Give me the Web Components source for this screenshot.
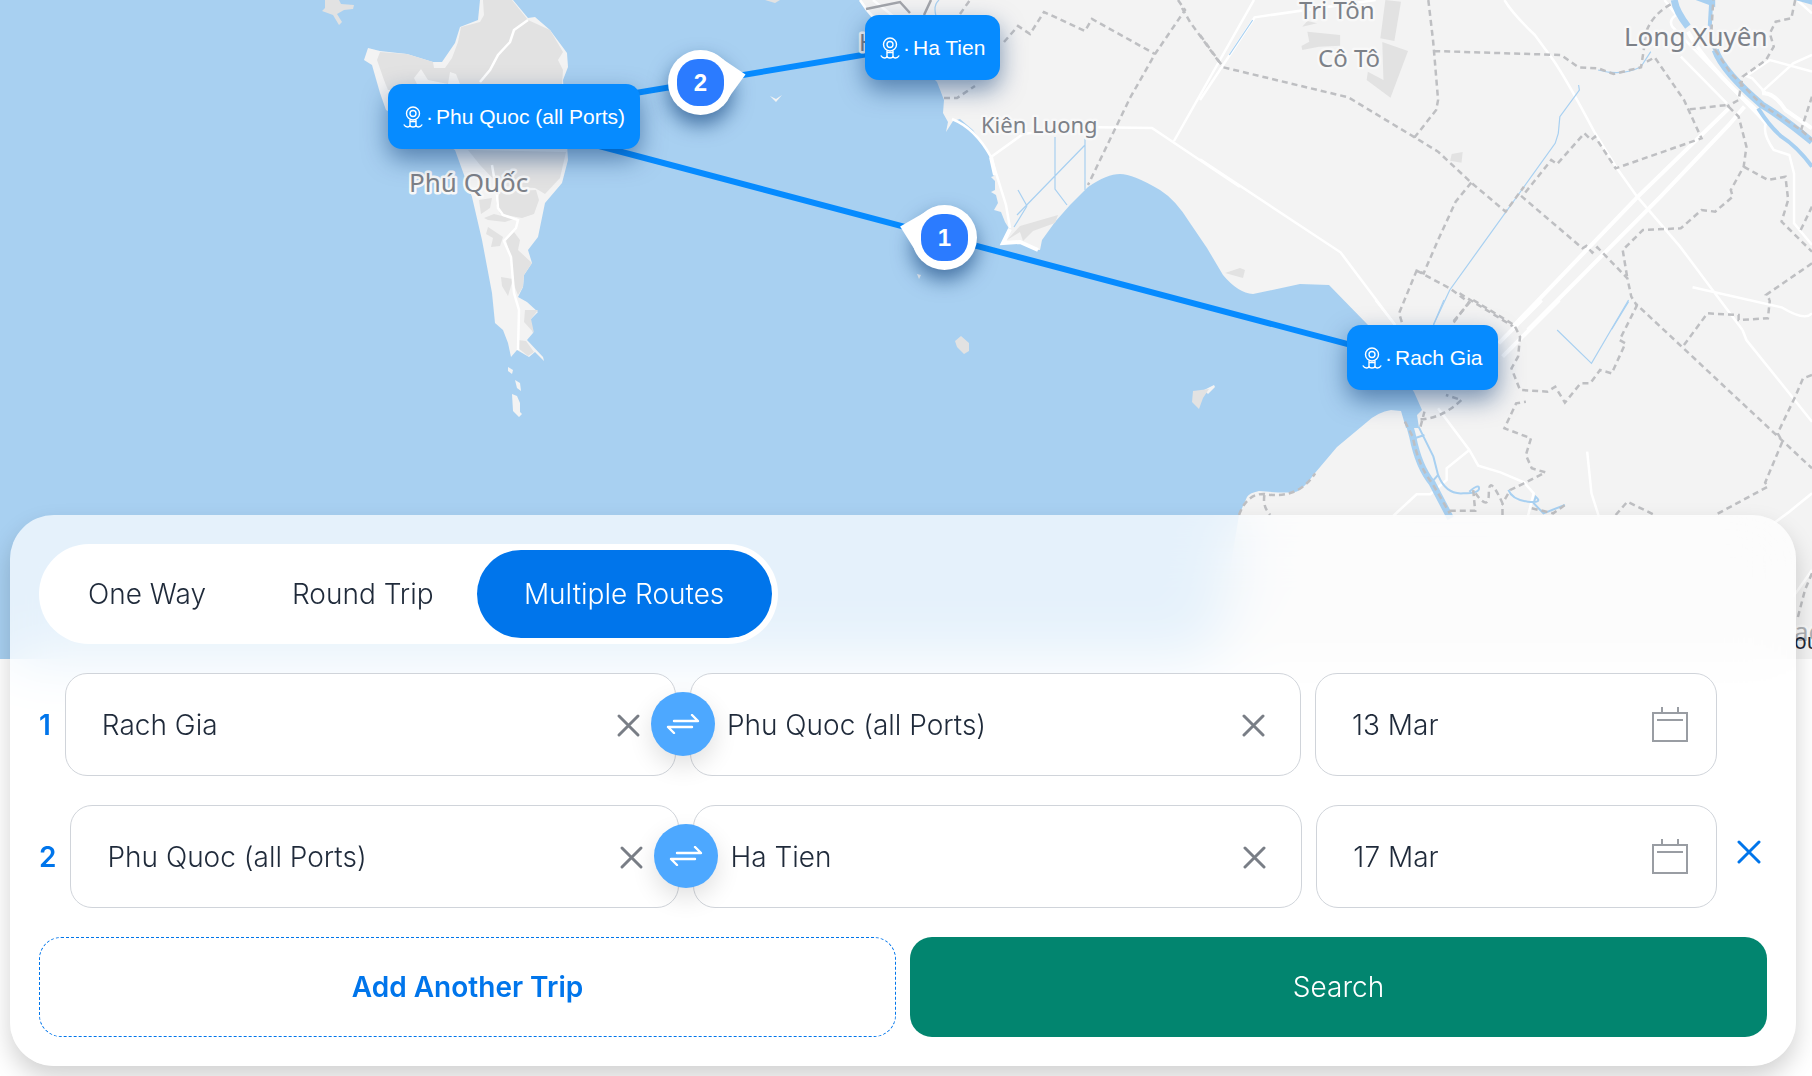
<!DOCTYPE html>
<html lang="en">
<head>
<meta charset="utf-8">
<title>Ferry trips</title>
<style>
  body {
    margin: 0;
    background: #fff;
    color: #1f2a3a;
    font-family: Inter, "Liberation Sans", sans-serif;
    font-weight: 300;
    font-size: 28px;
    overflow-x: hidden;
  }
</style>
</head>
<body>

<trip-planner>
  <route-map slot="map">
    <map-port style="left: 388px; top: 84px">Phu Quoc (all Ports)</map-port>
    <map-port style="left: 865px; top: 15px">Ha Tien</map-port>
    <map-port style="left: 1347px; top: 325px">Rach Gia</map-port>
    <map-step angle="-10" style="left: 668px; top: 50px">2</map-step>
    <map-step angle="194" style="left: 912px; top: 205px">1</map-step>
  </route-map>
  <trip-tabs></trip-tabs>
  <trip-row number="1" from="Rach Gia" to="Phu Quoc (all Ports)" date="13 Mar"></trip-row>
  <trip-row number="2" from="Phu Quoc (all Ports)" to="Ha Tien" date="17 Mar" removable></trip-row>
  <trip-actions></trip-actions>
</trip-planner>

<script>
function define(name, html, setup) {
  const template = document.createElement("template");
  template.innerHTML = html;

  customElements.define(name, class extends HTMLElement {
    constructor() {
      super();
      this.attachShadow({ mode: "open" });
      this.shadowRoot.appendChild(template.content.cloneNode(true));
    }

    connectedCallback() {
      if (setup) setup(this, this.shadowRoot);
    }
  });
}

// Page: map on top, search card over its lower edge
define("trip-planner", `
<style>
  :host { display: block; }
  section {
    position: relative;
    display: flex;
    flex-direction: column;
    gap: 29px;
    margin: -144px 16px 10px 10px;
    padding: 29px;
    border-radius: 44px;
    background: rgba(255, 255, 255, .7);
    backdrop-filter: blur(30px);
    box-shadow: 0 12px 24px rgba(0, 0, 0, .18);
  }
</style>
<slot name="map"></slot>
<section><slot></slot></section>
`);

define("route-map", `
<style>
  :host {
    display: block;
    position: relative;
    height: 659px;
    overflow: hidden;
    background: #a8d0f1;
  }
  svg { display: block; width: 100%; height: 100%; }
  path { vector-effect: non-scaling-stroke; }
  .land { fill: #f3f3f3; }
  .park { fill: #e2e2e2; }
  .road { fill: none; stroke: #fff; stroke-width: 2.5; }
  .wide { stroke-width: 4; }
  .canal { fill: none; stroke: #a8d0f1; stroke-width: 1.2; }
  .river { fill: none; stroke: #a8d0f1; stroke-width: 7; }
  .border { fill: none; stroke: #bebfc2; stroke-width: 2.5; stroke-dasharray: 6 4; }
  .line { stroke: #068bff; stroke-width: 6; }
  text {
    font-family: "Noto Sans", sans-serif;
    font-weight: 400;
    fill: #7d8188;
    stroke: #f8f8f8;
    stroke-width: 5;
    stroke-linejoin: round;
    paint-order: stroke;
  }
</style>
<svg viewBox="0 0 1812 659" preserveAspectRatio="xMinYMin slice" aria-hidden="true">
  <!-- mainland -->
  <path class="land" d="M860 0L866 9 880 25 937 82 944 100 943 113 948 122 946 132 953 121 960 119 973 130 985 147 991 160 994 176 991 177 995 181 995 190 991 192 996 195 998 203 994 210 1001 212 1005 222 1010 230 1003 243 1020 242 1035 250 1040 250 1042 240 1055 222 1070 205 1088 187Q1107 174 1120 174T1160 190Q1176 200 1190 223L1207 248 1223 275Q1238 293 1253 294L1300 284 1329 285 1368 325 1414 392 1422 410 1417 415 1419 428 1406 428 1401 411 1391 410Q1378 412 1367 422L1337 447 1315 473Q1304 488 1298 491T1259 491Q1249 493 1247 497L1239 515 1225 600 1212 659H1812V0Z"/>
  <!-- Phu Quoc island -->
  <path class="land" d="M480 0L478 20 460 27 455 43 442 62 433 62 407 54 380 51 368 48 364 60 372 65 380 93 386 110 455 150 472 197 482 240 492 293 495 323 503 330 508 343 511 357 517 350 529 357 535 352 544 361 543 357 527 340 533 333 530 320 538 312 527 302 518 297 523 287 524 275 532 263 528 250 538 237 545 203 562 183 568 160 563 80 568 67 567 53 550 30 535 17 528 18 513 0Z"/>
  <path class="park" d="M483 0L484 15 480 22 461 27 458 42 452 58 445 68H434L433 62 407 54 380 52 377 60 384 80 388 90H420L414 78 421 69 428 80 448 84 450 72 456 74 460 84H562L563 70 558 60 563 52 550 30 528 20 512 0ZM468 150L566 152 560 178 545 194 535 188 500 186 480 165ZM500 192L536 190 539 200 534 214 522 218 500 214 496 203ZM479 200L492 198 490 208 481 214ZM484 218L494 214 514 219 505 222 488 220ZM488 227L503 237 500 246 491 247 493 238 486 234ZM506 240L514 232 520 240 518 250 532 263 524 275 523 287 518 295 514 285 510 255ZM501 277L513 279 508 296 502 286ZM525 310L538 310 531 319 534 333 524 322ZM518 340L526 341 534 352 528 356 518 348Z"/>
  <path class="road" d="M528 20L514 30 510 42 498 55 490 70 480 82M492 165L497 195 498 208 503 215 518 220 516 228 504 241 511 257 514 293 519 310 518 350"/>
  <path class="land" d="M508 367L513 370 512 374 508 371ZM515 380L520 383 521 391 517 388ZM512 394L517 396 520 403 520 412 522 414 519 417 513 411ZM770 96L776 99 782 95 776 102ZM917 274L921 275 919 279ZM1204 390L1214 385 1215 387 1208 394Z"/>
  <path class="park" d="M325 0H339L341 4 354 5 353 9 344 10 337 14 342 22 339 25 333 15 322 11 325 8ZM765 0H780L775 3ZM961 336L969 343V351L964 354 957 347 955 341ZM1193 391L1209 389 1203 398 1199 409 1192 402ZM1007 240L1020 226 1058 215 1055 223 1033 231 1023 241 1020 232ZM1225 273L1240 268 1245 270 1243 278Z"/>
  <path class="road" d="M860 0Q874 22 890 31L906 50M952 119Q975 128 991 157L1006 205 1010 228M991 157L1023 134 1078 127 1152 128 1240 187M1254 0L1174 141M873 0L893 16"/>
  <path class="road wide" d="M991 157L995 175M1010 229L1003 243 1020 242 1038 250"/>
  <path class="canal" d="M936 16Q933 5 939 0M1055 137V189L1067 205M1085 137V190M1085 145L1017 215M1018 190L1027 206M1027 206L1014 227"/>
  <path class="border" style="stroke: #a3a5aa; stroke-dasharray: none" d="M866 9L900 2 910 13M924 15L931 0"/>
  <path class="border" d="M960 14L970 0M1004 42L1018 26 1030 34 1044 12 1085 31 1092 19 1155 54M1178 0L1185 10 1155 54 1130 98 1088 185M1182 8L1190 22 1222 66M944 98L957 98 975 86"/>

  <!-- delta, north half -->
  <g transform="translate(1200 0) scale(.3903 .3333)">
    <path class="park" d="M475 0L515 5 498 123 462 115ZM467 126L533 153 488 293 427 240 430 215 470 240ZM275 95L359 105V137L305 140 262 150 260 138 280 125ZM262 80L275 63 300 70ZM645 462L673 456 670 488 641 482Z"/>
    <path class="road" d="M450 0L140 52 0 300M0 478L360 757 500 975M780 0Q800 40 858 105L905 180Q940 240 1010 395L1070 508 1120 590 1230 740 1390 990M1232 170L1350 310M1262 862L1490 922Q1550 965 1568 940M1450 280L1415 235 1400 228 1460 180 1568 215M1440 275L1520 190 1568 165M1190 0L1220 45Q1200 60 1210 80L1450 370Q1440 400 1470 450L1510 465 1522 520V670L1568 735M1530 0L1568 40"/>
    <path class="road wide" d="M1355 325L1120 592 800 982M1395 320L1355 375 1180 590 840 990M1250 95Q1300 200 1420 325L1450 370M1440 280Q1470 275 1500 330L1568 385"/>
    <path class="canal" d="M135 60L75 165M970 255L972 270 922 350 918 400 910 430 640 870 598 975M1098 905L1055 988M1020 210Q1080 230 1130 200L1155 155"/>
    <path class="river" d="M1215 0Q1220 35 1250 80M1320 150Q1340 215 1440 315Q1490 350 1568 425"/>
    <path class="river" style="stroke-width: 4" d="M1310 0L1305 100 1320 150M1430 325Q1460 380 1490 410 1530 440 1568 500"/>
    <path fill="#a8d0f1" d="M1270 0H1320V22ZM1525 0H1568V14Z"/>
    <path class="border" d="M0 105L60 202 380 292 550 412 610 455 695 548 783 635 830 560M585 0L597 120 600 160 610 300 605 330 550 412M600 153L925 165 970 202 1020 205 1060 222 1130 202 1145 90Q1165 35 1215 8M1145 185L1165 172 1240 300 1285 415 1065 505 1012 410 1002 420 985 400 915 492 900 480 825 590 980 745 990 738 1005 758 1018 742 1095 835 1105 890 1120 918M695 548L655 605 610 720 573 820 555 812 510 940 518 970M555 812L640 865 690 908 645 970M665 880L810 985M1255 328L1350 315 1380 350 1400 440 1393 500 1360 570 1365 590 1320 635 1285 630 1232 685 1135 690 1083 750 1095 835M1393 500L1455 540 1500 530 1507 600 1490 665 1568 755M1568 620L1535 700M1568 790L1450 885 1460 900M1525 0L1515 55 1475 65 1460 100 1470 140 1450 180 1390 230 1380 300 1350 320M1320 150L1310 100 1315 0M1320 150L1360 220 1440 315 1540 390 1568 420M1568 290L1540 390"/>
  </g>

  <!-- delta, south half -->
  <g transform="translate(1200 300) scale(.3903 .3333)">
    <path class="road" d="M610 325L690 450 713 497 770 517 830 547 855 580 840 650M690 450L632 505V540L590 583H555L495 648M992 455L1003 580 1022 650M1390 90L1400 120 1568 365M1568 580L1510 635 1470 670M450 0L500 75M1568 810L1520 890"/>
    <path class="road wide" d="M875 0L765 130M920 0L775 170"/>
    <path class="canal" style="stroke-width: 2" d="M560 380L598 470 610 525 595 545M610 525Q630 585 675 580 715 580 715 565T690 575M790 570Q800 600 840 605T860 590L855 610 880 640 935 615M550 415L575 405"/>
    <path class="canal" d="M625 0L598 75M915 90L1003 190 1098 0"/>
    <path class="river" d="M530 345L545 410Q560 500 595 550L642 655"/>
    <path class="border" d="M525 365L545 410Q560 500 595 550L640 640M565 380L575 335M565 358Q620 355 670 300L630 285M100 645Q120 580 165 582 250 600 295 520M165 585Q160 620 180 645M640 632H705L700 570Q740 640 740 580T775 610L795 570 830 550 885 517 850 505 835 465 848 415 780 385 810 310 835 305M690 5L645 75M700 0L805 75 820 110 815 170 798 205 820 270 890 275 910 260 935 308 975 250 1000 250 1025 210 1055 220 1090 130 1075 120 1120 15 1568 505M1240 135L1300 40 1380 45V60L1455 55 1460 0M1568 225L1545 235 1525 290 1480 400 1492 425 1448 548 1455 560 1320 645M1065 645L1095 605 1165 645M775 645V610M850 625L905 640 935 615M1568 820L1550 870 1530 960"/>
  </g>

  <path class="line" d="M516 124L1423 364M516 113L934 43"/>
  <g font-size="26">
    <text x="409" y="192">Phú Quốc</text>
    <text x="1624" y="46">Long Xuyên</text>
    <text x="1794" y="641" fill-opacity=".6">ao</text>
  </g>
  <g font-size="24">
    <text x="859" y="51">H</text>
    <text x="1299" y="19">Tri Tôn</text>
    <text x="1318" y="67">Cô Tô</text>
  </g>
  <text x="981" y="133" font-size="22">Kiên Luong</text>
  <text x="1794" y="649" font-size="21" style="fill: #1f2a3a; stroke: none">ou</text>
</svg>
<slot></slot>
`);

define("map-port", `
<style>
  :host {
    position: absolute;
    display: flex;
    align-items: center;
    gap: 3px;
    height: 65px;
    padding: 0 15px;
    border-radius: 14px;
    background: #068bff;
    box-shadow: 0 10px 24px rgba(0, 50, 110, .5);
    color: #fff;
    font: 400 21px "Liberation Sans", Arial, sans-serif;
    white-space: nowrap;
  }
</style>
<svg width="20" height="22" viewBox="0 0 20 22" fill="none" stroke="#fff" stroke-width="1.4" aria-hidden="true">
  <circle cx="10" cy="7.500" r="6.500"/>
  <circle cx="10" cy="7.500" r="3"/>
  <path d="M7 13.500V19Q6.800 21 4.500 21T.8 18.500M7 19.500Q7.500 21 10 21T13 19.500M13 13.500V19Q13.200 21 15.500 21T19.200 18.500M7 15.500H13"/>
</svg>
<span>·</span>
<span><slot></slot></span>
`);

define("map-step", `
<style>
  :host {
    position: absolute;
    display: grid;
    place-items: center;
    width: 65px;
    height: 65px;
    border-radius: 50%;
    background: #fff;
    box-shadow: 0 10px 20px rgba(0, 50, 110, .6);
    color: #fff;
    font: 700 24px "Liberation Sans", Arial, sans-serif;
  }
  svg { position: absolute; inset: 0; overflow: visible; }
  span {
    position: relative;
    width: 47px;
    border-radius: 21px;
    background: #2b7bff;
    line-height: 47px;
    text-align: center;
  }
</style>
<svg width="65" height="65" viewBox="-32 -32 64 64" aria-hidden="true">
  <path fill="#fff" d="M18 -26L45 0 18 26Z"/>
</svg>
<span><slot></slot></span>
`, (host, root) => {
  root.querySelector("path").setAttribute("transform", `rotate(${host.getAttribute("angle")})`);
});

define("trip-tabs", `
<style>
  :host { display: flex; }
  nav {
    display: flex;
    padding: 6px;
    border-radius: 50px;
    background: #fff;
  }
  button {
    height: 88px;
    padding: 0 43px;
    border: 0;
    border-radius: 44px;
    background: none;
    color: inherit;
    font: inherit;
  }
  .active { min-width: 295px; background: #0075eb; color: #fff; }
</style>
<nav>
  <button type="button">One Way</button>
  <button type="button">Round Trip</button>
  <button type="button" class="active" aria-pressed="true">Multiple Routes</button>
</nav>
`);

define("trip-field", `
<style>
  :host {
    display: flex;
    align-items: center;
    box-sizing: border-box;
    min-width: 0;
    height: 103px;
    padding: 0 28px 0 36px;
    border: 1px solid #d0d4da;
    border-radius: 22px;
    background: #fff;
  }
  input {
    flex: 1;
    min-width: 0;
    padding: 0;
    border: 0;
    outline: 0;
    background: none;
    color: inherit;
    font: inherit;
  }
  button { display: flex; padding: 0; border: 0; background: none; }
  svg { fill: none; stroke: #797e86; stroke-width: 3; stroke-linecap: round; }
  .calendar, :host([kind="date"]) .clear { display: none; }
  :host([kind="date"]) .calendar { display: flex; }
</style>
<input type="text">
<button type="button" class="clear" aria-label="Clear">
  <svg width="36" height="36"><path d="M8 9L27 28M27 9L8 28"/></svg>
</button>
<button type="button" class="calendar" aria-label="Open calendar">
  <svg width="36" height="36" style="stroke: #999da3; stroke-width: 2; stroke-linecap: butt">
    <path d="M1 6H35V34H1ZM5 13H31M10 0V7M26 0V7"/>
  </svg>
</button>
`, (host, root) => {
  const input = root.querySelector("input");
  input.value = host.getAttribute("value");
  input.setAttribute("aria-label", host.getAttribute("label"));
  root.querySelector(".clear").addEventListener("click", () => { input.value = ""; });
});

define("trip-row", `
<style>
  :host { display: flex; align-items: center; }
  b { padding-right: 14px; color: #0075eb; font-weight: 600; }
  .fields {
    flex: 1;
    display: grid;
    grid-template-columns: 38fr 38fr 25fr;
    gap: 14px;
  }
  .from { position: relative; display: grid; }
  .swap {
    position: absolute;
    top: 19px;
    right: -39px;
    z-index: 1;
    display: grid;
    place-items: center;
    width: 64px;
    height: 64px;
    padding: 0;
    border: 0;
    border-radius: 50%;
    background: #4da8ff;
    box-shadow: 0 10px 24px rgba(0, 0, 0, .12);
  }
  .remove {
    align-self: stretch;
    width: 50px;
    padding: 0 0 10px 14px;
    border: 0;
    background: none;
  }
  .remove svg { display: block; margin: auto; }
  :host(:not([removable])) .remove { visibility: hidden; }
  svg { fill: none; stroke-linecap: round; stroke-linejoin: round; }
</style>
<b></b>
<div class="fields">
  <div class="from">
    <trip-field id="from" label="From"></trip-field>
    <button type="button" class="swap" aria-label="Swap ports">
      <svg width="34" height="20" stroke="#fff" stroke-width="2.4"><path d="M8 7H32L26 1M26 13H2L8 19"/></svg>
    </button>
  </div>
  <trip-field id="to" label="To"></trip-field>
  <trip-field id="date" label="Date" kind="date"></trip-field>
</div>
<button type="button" class="remove" aria-label="Remove trip">
  <svg width="24" height="24" stroke="#0075eb" stroke-width="3"><path d="M2 2L22 22M22 2L2 22"/></svg>
</button>
`, (host, root) => {
  root.querySelector("b").textContent = host.getAttribute("number");
  for (const id of ["from", "to", "date"]) {
    const field = root.getElementById(id);
    field.setAttribute("value", host.getAttribute(id));
    field.shadowRoot.querySelector("input").value = host.getAttribute(id);
  }
});

define("trip-actions", `
<style>
  :host { display: grid; grid-template-columns: 1fr 1fr; gap: 14px; }
  button {
    height: 100px;
    border: 0;
    border-radius: 22px;
    background: #02856f;
    color: #fff;
    font: inherit;
  }
  .add {
    border: 1px dashed #0075eb;
    background: #fff;
    color: #0075eb;
    font-weight: 600;
  }
</style>
<button type="button" class="add">Add Another Trip</button>
<button type="submit">Search</button>
`);
</script>
</body>
</html>
